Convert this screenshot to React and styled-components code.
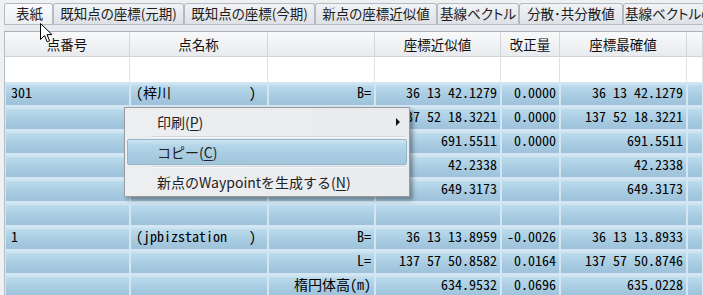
import React from "react";
import styled, { createGlobalStyle, css } from "styled-components";

const Global = createGlobalStyle`
  html, body { margin: 0; padding: 0; background: #eef0f2; overflow: hidden; }
  body { width: 703px; height: 295px; }
`;

const UI = `"Noto Sans CJK JP", "Noto Sans", sans-serif`;
const MONO = `"Noto Sans Mono CJK JP", "Noto Sans Mono CJK SC", monospace`;

const Window = styled.div`
  position: relative;
  width: 703px;
  height: 295px;
  overflow: hidden;
  background: #eef0f2;
  font-family: ${UI};
`;

const TabStrip = styled.div`
  display: flex;
  align-items: flex-end;
  height: 24px;
  padding-left: 4px;
  box-sizing: border-box;
  overflow: hidden;
`;

const Tab = styled.div`
  flex: 0 0 ${(p) => p.$w}px;
  height: 21px;
  box-sizing: border-box;
  border: 1px solid #b3bac3;
  border-bottom: none;
  border-radius: 3px 3px 0 0;
  background: ${(p) =>
    p.$active
      ? "linear-gradient(#fbfbfc, #eceef1)"
      : "linear-gradient(#f1f3f5, #dde1e6)"};
  font-size: 13.5px;
  line-height: 19px;
  color: #1b1b1b;
  text-align: center;
  white-space: nowrap;
  overflow: hidden;
  font-feature-settings: "palt";
  padding-left: ${(p) => p.$pl || 0}px;
`;

const Band = styled.div`
  height: 8px;
  margin-left: 4px;
  box-sizing: border-box;
  border-top: 1px solid #b6bdc5;
  border-bottom: 1px solid #a9b1ba;
  background: #e8eaed;
`;

const Grid = styled.div`
  margin-left: 4px;
  border-left: 1px solid #b5bdc6;
`;

const Row = styled.div`
  display: grid;
  grid-template-columns: 125px 138px 107px 126px 59px 127px 1fr;
  height: ${(p) => p.$h}px;
`;

const HeadCell = styled.div`
  box-sizing: border-box;
  border-right: 1px solid #d2d7dc;
  border-bottom: 1px solid #d0d5da;
  background: linear-gradient(#f8f9fa, #e8ebee);
  font-size: 13.5px;
  line-height: 24px;
  color: #111;
  text-align: center;
  white-space: nowrap;
`;

const BlankCell = styled.div`
  box-sizing: border-box;
  border-right: 1px solid #dde2e7;
  background: #ffffff;
`;

const Cell = styled.div`
  box-sizing: border-box;
  border: 1px solid #d4e6f1;
  background: linear-gradient(
    #d2e8f4 0%,
    #b9d9eb 16%,
    #abcee3 50%,
    #a2c6dd 80%,
    #9dc2d9 100%
  );
  font-family: ${MONO};
  font-size: 14px;
  line-height: 17px;
  padding: 1px 3px 0 5px;
  color: #000;
  white-space: pre;
  overflow: hidden;
  text-align: ${(p) => (p.$right ? "right" : "left")};
  ${(p) =>
    p.$split &&
    css`
      display: flex;
      justify-content: space-between;
      padding-right: 11px;
    `}
`;

const Menu = styled.div`
  position: absolute;
  left: 124px;
  top: 107px;
  width: 286px;
  box-sizing: border-box;
  padding: 1px 2px 1px 1px;
  border: 1px solid #989ca1;
  background: linear-gradient(90deg, #eceef0, #e9ebee);
  box-shadow: 3px 3px 4px rgba(0, 0, 0, 0.35);
  font-size: 14px;
  color: #222;
`;

const Item = styled.div`
  position: relative;
  height: 26px;
  box-sizing: border-box;
  padding-left: 29px;
  line-height: 24px;
  border: 1px solid transparent;
  border-radius: 2px;
  margin-left: 1px;
  white-space: nowrap;
  ${(p) =>
    p.$hot &&
    css`
      border-color: #93b6cd;
      background: linear-gradient(
        #cfe6f3 0%,
        #b7d8ea 20%,
        #aacde2 55%,
        #a2c6dc 100%
      );
    `}
`;

const Sep = styled.div`
  height: 1px;
  margin: 1px 2px 2px 25px;
  background: #d3d7dc;
  box-shadow: 0 1px 0 #f7f8f9;
`;

const Key = styled.span`
  text-decoration: underline;
  text-underline-offset: 2px;
`;

const Arrow = styled.span`
  position: absolute;
  right: 6px;
  top: 8px;
  width: 0;
  height: 0;
  border-left: 4px solid #111;
  border-top: 4px solid transparent;
  border-bottom: 4px solid transparent;
`;

const Cursor = styled.svg`
  position: absolute;
  left: 40px;
  top: 23px;
`;

const tabs = [
  { t: "表紙", w: 49, active: true, pl: 2 },
  { t: "既知点の座標(元期)", w: 131 },
  { t: "既知点の座標(今期)", w: 131 },
  { t: "新点の座標近似値", w: 122 },
  { t: "基線ベクトル", w: 82 },
  { t: "分散･共分散値", w: 104 },
  { t: "基線ベクトルの比較", w: 120 },
];

const heads = ["点番号", "点名称", "", "座標近似値", "改正量", "座標最確値", ""];

const rows = [
  ["301", ["(梓川", ")"], "B=", "36 13 42.1279", "0.0000", "36 13 42.1279"],
  ["", null, "L=", "137 52 18.3221", "0.0000", "137 52 18.3221"],
  ["", null, "楕円体高(m)", "691.5511", "0.0000", "691.5511"],
  ["", null, "ジオイド高(m)", "42.2338", "", "42.2338"],
  ["", null, "標高(m)", "649.3173", "", "649.3173"],
  ["", null, "", "", "", ""],
  ["1", ["(jpbizstation", ")"], "B=", "36 13 13.8959", "-0.0026", "36 13 13.8933"],
  ["", null, "L=", "137 57 50.8582", "0.0164", "137 57 50.8746"],
  ["", null, "楕円体高(m)", "634.9532", "0.0696", "635.0228"],
];

export default function App() {
  return (
    <Window>
      <Global />
      <TabStrip>
        {tabs.map((t) => (
          <Tab key={t.t} $w={t.w} $active={t.active} $pl={t.pl}>
            {t.t}
          </Tab>
        ))}
      </TabStrip>
      <Band />
      <Grid>
        <Row $h={25}>
          {heads.map((h, i) => (
            <HeadCell key={i}>{h}</HeadCell>
          ))}
        </Row>
        <Row $h={25}>
          {heads.map((_, i) => (
            <BlankCell key={i} />
          ))}
        </Row>
        {rows.map((r, i) => (
          <Row $h={24} key={i}>
            <Cell>{r[0]}</Cell>
            {r[1] ? (
              <Cell $split>
                <span>{r[1][0]}</span>
                <span>{r[1][1]}</span>
              </Cell>
            ) : (
              <Cell />
            )}
            <Cell $right>{r[2]}</Cell>
            <Cell $right>{r[3]}</Cell>
            <Cell $right>{r[4]}</Cell>
            <Cell $right>{r[5]}</Cell>
            <Cell />
          </Row>
        ))}
      </Grid>

      <Menu>
        <Item>
          印刷(<Key>P</Key>)
          <Arrow />
        </Item>
        <Sep />
        <Item $hot>
          コピー(<Key>C</Key>)
        </Item>
        <Sep />
        <Item>
          新点のWaypointを生成する(<Key>N</Key>)
        </Item>
      </Menu>

      <Cursor width="13" height="20" viewBox="0 0 13 20">
        <path
          d="M0.5 0.5 L0.5 16.5 L4.5 12.5 L7.2 18.8 L9.6 17.8 L7 11.6 L12 11.6 Z"
          fill="#fff"
          stroke="#000"
          strokeWidth="1"
          strokeLinejoin="miter"
        />
      </Cursor>
    </Window>
  );
}
